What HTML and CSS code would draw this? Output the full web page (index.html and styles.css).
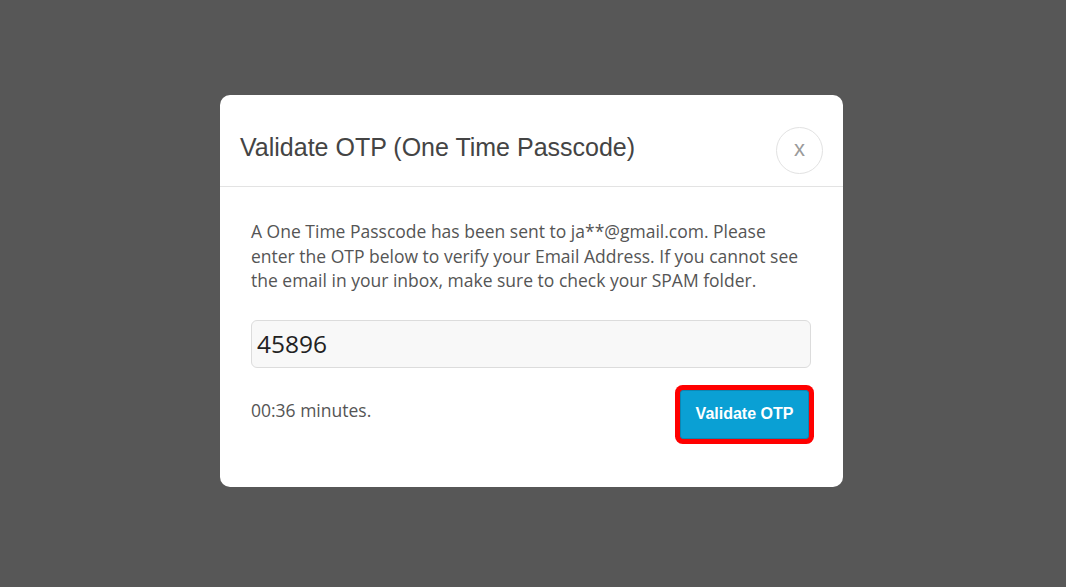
FILE: index.html
```html
<!DOCTYPE html>
<html>
<head>
<meta charset="utf-8">
<link rel="stylesheet" href="styles.css">
</head>
<body>
<div class="overlay">
  <div class="modal">
    <div class="modal-header">
      <h2 class="modal-title">Validate OTP (One Time Passcode)</h2>
      <button class="close-btn">x</button>
    </div>
    <div class="modal-body">
      <p class="message">A One Time Passcode has been sent to ja**@gmail.com. Please enter the OTP below to verify your Email Address. If you cannot see the email in your inbox, make sure to check your SPAM folder.</p>
      <div class="otp-input">45896</div>
      <div class="actions">
        <span class="timer">00:36 minutes.</span>
        <button class="validate-btn">Validate OTP</button>
      </div>
    </div>
  </div>
</div>
</body>
</html>
```

FILE: styles.css
```css
html, body {
  margin: 0;
  padding: 0;
  height: 100%;
}
body {
  background: #575757;
  font-family: "Open Sans", "Liberation Sans", sans-serif;
}
.overlay {
  display: flex;
  justify-content: center;
  align-items: flex-start;
  padding-top: 95px;
}
.modal {
  width: 623px;
  background: #fff;
  border-radius: 10px;
  margin-left: -3px;
}
.modal-header {
  height: 92px;
  box-sizing: border-box;
  border-bottom: 1px solid #e3e3e3;
  display: flex;
  align-items: flex-start;
  justify-content: space-between;
  padding: 0 20px 0 20px;
}
.modal-title {
  margin: 0;
  margin-top: 38px;
  font-family: "Liberation Sans", Arial, sans-serif;
  font-weight: normal;
  font-size: 25px;
  line-height: 29px;
  color: #444;
}
.close-btn {
  width: 47px;
  height: 47px;
  margin-top: 32px;
  border-radius: 50%;
  border: 1px solid #e2e2e2;
  background: #fff;
  color: #9a9a9a;
  font-family: "Liberation Sans", Arial, sans-serif;
  font-size: 22px;
  line-height: 1;
  padding: 0 0 3px 0;
}
.modal-body {
  padding: 32px 32px 48px 31px;
}
.message {
  margin: 0;
  font-size: 17.5px;
  line-height: 24.5px;
  color: #555;
}
.otp-input {
  margin-top: 27px;
  height: 48px;
  box-sizing: border-box;
  border: 1px solid #dcdcdc;
  border-radius: 6px;
  background: #f8f8f8;
  font-size: 24.5px;
  color: #222;
  display: flex;
  align-items: center;
  padding-left: 5px;
}
.actions {
  margin-top: 22px;
  display: flex;
  justify-content: space-between;
  align-items: center;
}
.timer {
  font-size: 17.5px;
  color: #555;
  margin-bottom: 8px;
}
.validate-btn {
  width: 129px;
  height: 49px;
  margin-right: 2px;
  background: #0aa0d4;
  border: 1px solid #0b86b3;
  color: #fff;
  font-family: "Liberation Sans", Arial, sans-serif;
  font-weight: bold;
  font-size: 16px;
  box-shadow: 0 0 0 5px #ff0000;
  border-radius: 3px;
}
```
